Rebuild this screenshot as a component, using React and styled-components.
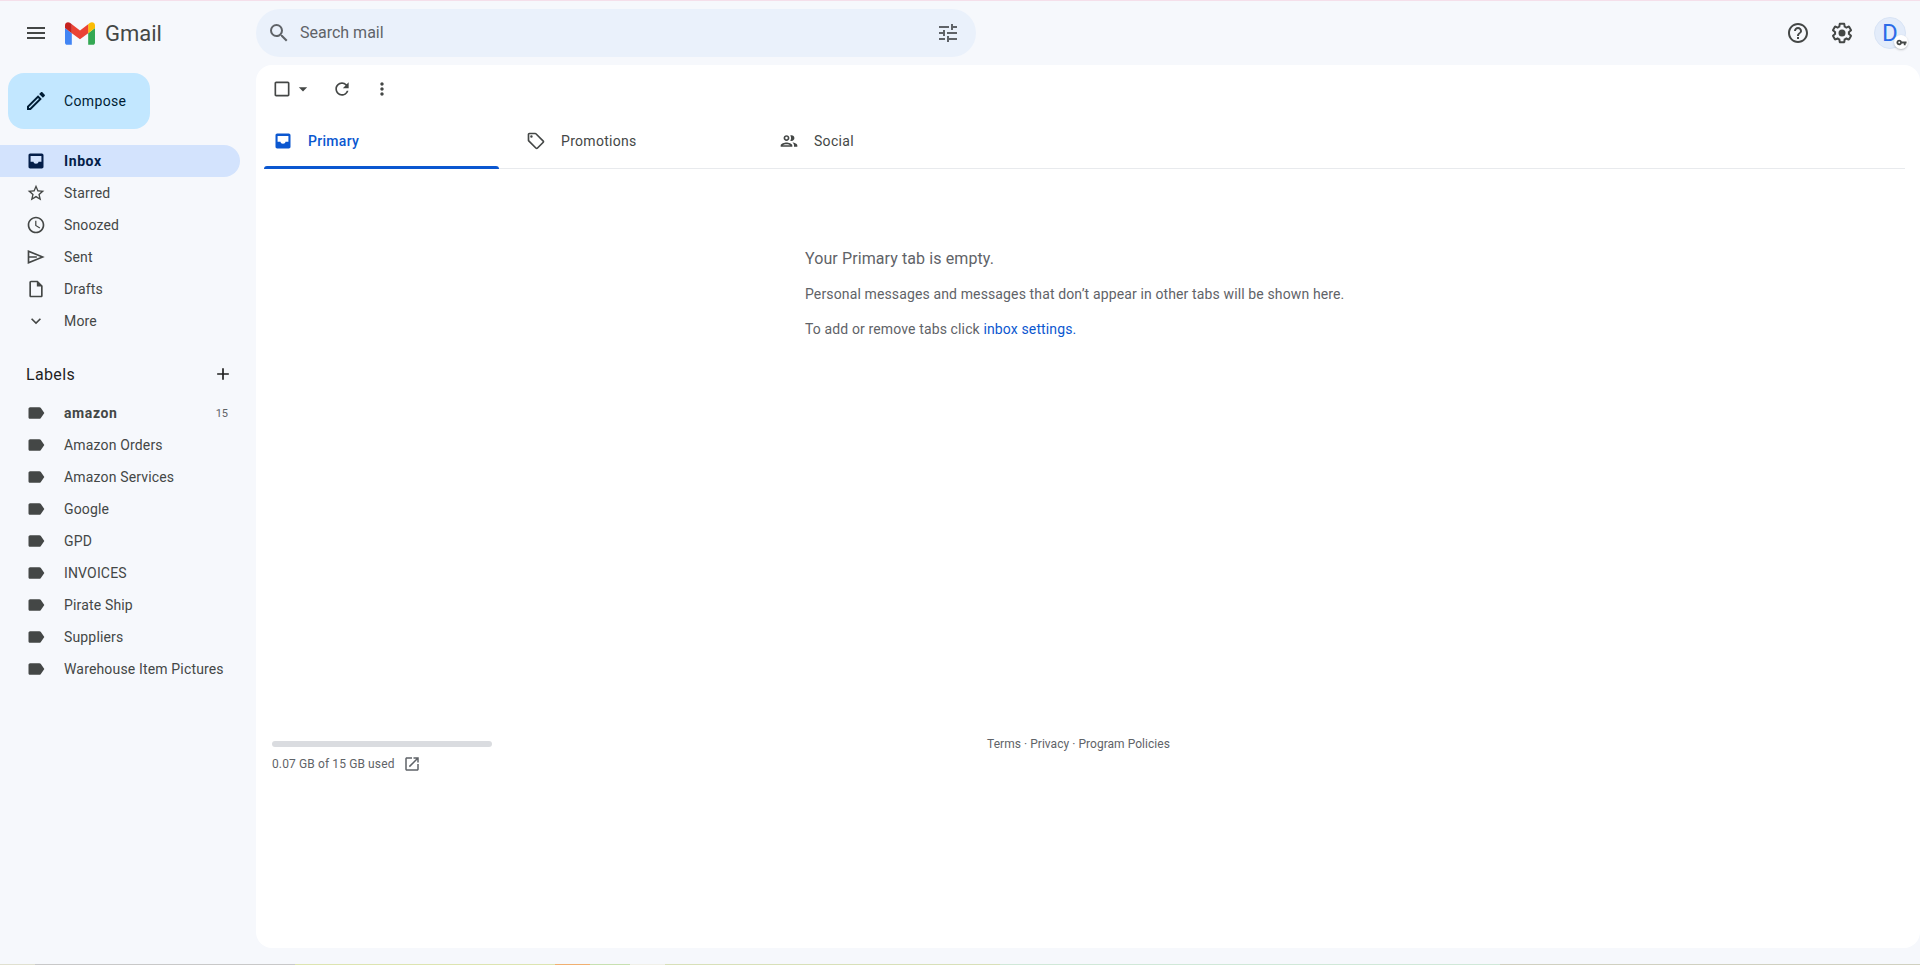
import styled, { createGlobalStyle } from "styled-components";

const paths = {
    menu: "M3 18h18v-2H3v2zm0-5h18v-2H3v2zm0-7v2h18V6H3z",
    edit: "M14.06 9.02l.92.92L5.92 19H5v-.92l9.06-9.06M17.66 3c-.25 0-.51.1-.7.29l-1.83 1.83 3.75 3.75 1.83-1.83c.39-.39.39-1.02 0-1.41l-2.34-2.34c-.2-.2-.45-.29-.71-.29zm-3.6 3.19L3 17.25V21h3.75L17.81 9.94l-3.75-3.75z",
    inbox: "M19 3H5c-1.1 0-2 .9-2 2v14c0 1.1.9 2 2 2h14c1.1 0 2-.9 2-2V5c0-1.1-.9-2-2-2zM18.5 13H15c0 1.3-1.3 2.4-3 2.4S9 14.3 9 13H5.5V6h13z",
    star: "M22 9.24l-7.19-.62L12 2 9.19 8.63 2 9.24l5.46 4.73L5.82 21 12 17.27 18.18 21l-1.63-7.03L22 9.24zM12 15.4l-3.76 2.27 1-4.28-3.32-2.88 4.38-.38L12 6.1l1.71 4.04 4.38.38-3.32 2.88 1 4.28L12 15.4z",
    clock: "M11.99 2C6.47 2 2 6.48 2 12s4.47 10 9.99 10C17.52 22 22 17.52 22 12S17.52 2 11.99 2zM12 20c-4.42 0-8-3.58-8-8s3.58-8 8-8 8 3.58 8 8-3.58 8-8 8zm.5-13H11v6l5.25 3.15.75-1.23-4.5-2.67z",
    send: "M2 3.5L22.5 12 2 20.5zM4 6.6v4.6h9v1.6H4v4.6L17.4 12z",
    draft: "M14 2H6c-1.1 0-2 .9-2 2v16c0 1.1.9 2 2 2h12c1.1 0 2-.9 2-2V8l-6-6zM6 20V4h7v5h5v11H6z",
    more: "M16.59 8.59L12 13.17 7.41 8.59 6 10l6 6 6-6z",
    add: "M19 13h-6v6h-2v-6H5v-2h6V5h2v6h6v2z",
    label: "M17.63 5.84C17.27 5.33 16.67 5 16 5L5 5.01C3.9 5.01 3 5.9 3 7v10c0 1.1.9 1.99 2 1.99L16 19c.67 0 1.27-.33 1.63-.84L22 12l-4.37-6.16z",
    search: "M15.5 14h-.79l-.28-.27A6.471 6.471 0 0 0 16 9.5 6.5 6.5 0 1 0 9.5 16c1.61 0 3.09-.59 4.23-1.57l.27.28v.79l5 4.99L20.49 19l-4.99-5zm-6 0C7.01 14 5 11.99 5 9.5S7.01 5 9.5 5 14 7.01 14 9.5 11.99 14 9.5 14z",
    tune: "M3 17v2h6v-2H3zM3 5v2h10V5H3zm10 16v-2h8v-2h-8v-2h-2v6h2zM7 9v2H3v2h4v2h2V9H7zm14 4v-2H11v2h10zm-6-4h2V7h4V5h-4V3h-2v6z",
    help: "M11 18h2v-2h-2v2zm1-16C6.48 2 2 6.48 2 12s4.48 10 10 10 10-4.48 10-10S17.52 2 12 2zm0 18c-4.41 0-8-3.59-8-8s3.59-8 8-8 8 3.59 8 8-3.59 8-8 8zm0-14c-2.21 0-4 1.79-4 4h2c0-1.1.9-2 2-2s2 .9 2 2c0 2-3 1.75-3 5h2c0-2.25 3-2.5 3-5 0-2.21-1.79-4-4-4z",
    gear: "M13.85 22.25h-3.7c-.74 0-1.36-.54-1.45-1.27l-.27-1.89c-.27-.14-.53-.29-.79-.46l-1.8.72c-.7.26-1.47-.03-1.81-.65L2.2 15.53c-.35-.66-.2-1.44.36-1.88l1.53-1.19c-.01-.15-.02-.3-.02-.46 0-.15.01-.31.02-.46l-1.52-1.19c-.59-.45-.74-1.26-.37-1.88l1.85-3.19c.34-.62 1.11-.9 1.79-.63l1.81.73c.26-.17.52-.32.78-.46l.27-1.91c.09-.7.71-1.25 1.44-1.25h3.7c.74 0 1.36.54 1.45 1.27l.27 1.89c.27.14.53.29.79.46l1.8-.72c.71-.26 1.48.03 1.82.65l1.84 3.18c.36.66.2 1.44-.36 1.88l-1.52 1.19c.01.15.02.3.02.46s-.01.31-.02.46l1.52 1.19c.56.45.72 1.23.37 1.86l-1.86 3.22c-.34.62-1.11.9-1.8.63l-1.8-.72c-.26.17-.52.32-.78.46l-.27 1.91c-.1.68-.72 1.22-1.46 1.22zm-3.23-2h2.76l.37-2.55.53-.22c.44-.18.88-.44 1.34-.78l.45-.34 2.38.96 1.38-2.4-2.03-1.58.07-.56c.03-.26.06-.51.06-.78s-.03-.53-.06-.78l-.07-.56 2.03-1.58-1.39-2.4-2.39.96-.45-.35c-.42-.32-.87-.58-1.33-.77l-.52-.22-.37-2.55h-2.76l-.37 2.55-.53.21c-.44.19-.88.44-1.34.79l-.45.33-2.38-.95-1.39 2.39 2.03 1.58-.07.56a7 7 0 0 0-.06.79c0 .26.02.53.06.78l.07.56-2.03 1.58 1.38 2.4 2.39-.96.45.35c.43.33.86.58 1.33.77l.53.22.38 2.55zM12 15.5a3.5 3.5 0 1 0 0-7 3.5 3.5 0 0 0 0 7z",
    checkbox: "M19 5v14H5V5h14m0-2H5c-1.1 0-2 .9-2 2v14c0 1.1.9 2 2 2h14c1.1 0 2-.9 2-2V5c0-1.1-.9-2-2-2z",
    caret: "M7 10l5 5 5-5z",
    refresh: "M17.65 6.35A7.958 7.958 0 0 0 12 4c-4.42 0-7.99 3.58-7.99 8s3.57 8 7.99 8c3.73 0 6.84-2.55 7.73-6h-2.08A5.99 5.99 0 0 1 12 18c-3.31 0-6-2.69-6-6s2.69-6 6-6c1.66 0 3.14.69 4.22 1.78L13 11h7V4l-2.35 2.35z",
    dots: "M12 8c1.1 0 2-.9 2-2s-.9-2-2-2-2 .9-2 2 .9 2 2 2zm0 2c-1.1 0-2 .9-2 2s.9 2 2 2 2-.9 2-2-.9-2-2-2zm0 6c-1.1 0-2 .9-2 2s.9 2 2 2 2-.9 2-2-.9-2-2-2z",
    tag: "M21.41 11.41l-8.83-8.83c-.37-.37-.88-.58-1.41-.58H4c-1.1 0-2 .9-2 2v7.17c0 .53.21 1.04.59 1.41l8.83 8.83c.78.78 2.05.78 2.83 0l7.17-7.17c.78-.78.78-2.04-.01-2.83zM12.83 20L4 11.17V4h7.17L20 12.83 12.83 20zM6.5 8a1.5 1.5 0 1 0 0-3 1.5 1.5 0 0 0 0 3z",
    people: "M9 13.75c-2.34 0-7 1.17-7 3.5V19h14v-1.75c0-2.33-4.66-3.5-7-3.5zM4.34 17c.84-.58 2.87-1.25 4.66-1.25s3.82.67 4.66 1.25H4.34zM9 12c1.93 0 3.5-1.57 3.5-3.5S10.93 5 9 5 5.5 6.57 5.5 8.5 7.07 12 9 12zm0-5c.83 0 1.5.67 1.5 1.5S9.83 10 9 10s-1.5-.67-1.5-1.5S8.17 7 9 7zm7.04 6.81c1.16.84 1.96 1.96 1.96 3.44V19h4v-1.75c0-2.02-3.5-3.17-5.96-3.44zM15 12c1.93 0 3.5-1.57 3.5-3.5S16.93 5 15 5c-.54 0-1.04.13-1.5.35.63.89 1 1.98 1 3.15s-.37 2.26-1 3.15c.46.22.96.35 1.5.35z",
    open: "M19 19H5V5h7V3H5c-1.11 0-2 .9-2 2v14c0 1.1.89 2 2 2h14c1.1 0 2-.9 2-2v-7h-2v7zM14 3v2h3.59l-9.83 9.83 1.41 1.41L19 6.41V10h2V3h-7z",
    key: "M12.65 10C11.83 7.67 9.61 6 7 6c-3.31 0-6 2.69-6 6s2.69 6 6 6c2.61 0 4.83-1.67 5.65-4H17v4h4v-4h2v-4H12.65zM7 14c-1.1 0-2-.9-2-2s.9-2 2-2 2 .9 2 2-.9 2-2 2z",
};

const Global = createGlobalStyle`
    html, body {
        margin: 0;
        padding: 0;
        height: 100%;
        overflow: hidden;
        background: #f6f8fc;
    }
    * {
        box-sizing: border-box;
    }
`
const Page = styled.div`
    height: 965px;
    display: flex;
    flex-direction: column;
    font-family: Roboto, "Liberation Sans", sans-serif;
    font-size: 14px;
    letter-spacing: 0.13px;
    color: #444746;
    background: #f6f8fc;
`
const TopEdge = styled.div`
    height: 1px;
    flex: none;
    background: #f5dfea;
`
const BottomEdge = styled.div`
    height: 1px;
    flex: none;
    background: linear-gradient(90deg,
        #e0e0d0 0, #e0e0d0 35px,
        #c8c8c8 35px, #c8c8c8 295px,
        #dde4b0 295px, #dde4b0 555px,
        #f0b070 555px, #f0b070 590px,
        #c8e0b0 590px, #c8e0b0 630px,
        #f0f0e8 630px, #f0f0e8 665px,
        #d8e0b8 665px, #d8e0b8 1000px,
        #d0e8d8 1000px, #d0e8d8 1500px,
        #d0d0c0 1500px);
`
const Topbar = styled.header`
    height: 64px;
    flex: none;
    display: flex;
    align-items: center;
`
const Brand = styled.div`
    width: 256px;
    flex: none;
    display: flex;
    align-items: center;
    padding-left: 24px;
`
const Wordmark = styled.span`
    margin-left: 10px;
    font-size: 22px;
    letter-spacing: 0;
    color: #444746;
`
const Search = styled.div`
    width: 720px;
    height: 48px;
    display: flex;
    align-items: center;
    padding: 0 16px 0 11px;
    border-radius: 24px;
    background: #eaf1fb;
    font-size: 16px;
    letter-spacing: 0;
    color: #5f6368;
`
const SearchText = styled.span`
    margin: 0 0 2px 9px;
    flex: 1;
`
const SearchTune = styled.span`
    display: flex;
    margin-bottom: 1px;
`
const Actions = styled.div`
    margin-left: auto;
    display: flex;
    align-items: center;
    padding-right: 14px;
`
const ActionIcon = styled.span`
    display: flex;
    margin-left: 20px;
    color: #444746;
`
const Avatar = styled.div`
    position: relative;
    width: 32px;
    height: 32px;
    margin-left: 20px;
    border-radius: 50%;
    background: #e3ecfa;
    border: 1px solid #d9e4f5;
    display: flex;
    align-items: center;
    justify-content: center;
    color: #2a6be8;
    font-size: 24px;
    line-height: 1;
`
const KeyBadge = styled.span`
    position: absolute;
    right: -3px;
    bottom: -1px;
    width: 14px;
    height: 14px;
    border-radius: 50%;
    background: #fff;
    box-shadow: 0 1px 2px rgba(60, 64, 67, 0.3);
    display: flex;
    align-items: center;
    justify-content: center;
    color: #444746;
`
const Body = styled.div`
    flex: 1;
    display: flex;
    min-height: 0;
    padding-bottom: 16px;
`
const Sidebar = styled.nav`
    width: 256px;
    flex: none;
`
const Compose = styled.button`
    width: 142px;
    height: 56px;
    margin: 8px 0 16px 8px;
    padding: 0 0 0 16px;
    display: flex;
    align-items: center;
    gap: 16px;
    border: 0;
    border-radius: 16px;
    background: #c2e7ff;
    color: #001d35;
    font: 400 14px Roboto, sans-serif;
    letter-spacing: 0.35px;
`
const Row = styled.div`
    width: 240px;
    height: 32px;
    display: flex;
    align-items: center;
    gap: 18px;
    padding: 0 12px 0 26px;
    border-radius: 0 16px 16px 0;
    background: ${({ $active }) => ($active ? "#d3e3fd" : "transparent")};
    color: ${({ $active }) => ($active ? "#041e49" : "#444746")};
    font-weight: ${({ $active, $bold }) => ($active || $bold ? 700 : 400)};
    letter-spacing: ${({ $active, $bold }) => ($active || $bold ? "0.6px" : "0.16px")};
`
const RowText = styled.span`
    flex: 1;
`
const Count = styled.span`
    font-size: 11px;
    font-weight: 400;
    letter-spacing: 0;
    color: #5f6368;
`
const LabelsHead = styled.div`
    width: 240px;
    height: 40px;
    margin: 17px 0 3px;
    padding: 0 7px 0 26px;
    display: flex;
    align-items: center;
    justify-content: space-between;
    font-size: 16px;
    letter-spacing: 0.35px;
    color: #1f1f1f;
`
const Card = styled.main`
    flex: 1;
    border-radius: 16px;
    background: #fff;
    display: flex;
    flex-direction: column;
`
const Toolbar = styled.div`
    height: 48px;
    flex: none;
    display: flex;
    align-items: center;
    padding-left: 16px;
    color: #444746;
`
const ToolIcon = styled.span`
    display: flex;
    margin-left: ${({ $gap }) => $gap || 0}px;
`
const Tabs = styled.div`
    height: 56px;
    flex: none;
    display: flex;
    margin: 0 15px 0 8px;
    border-bottom: 1px solid #e8eaed;
`
const Tab = styled.div`
    position: relative;
    width: 253px;
    display: flex;
    align-items: center;
    gap: 15px;
    padding-left: 9px;
    letter-spacing: 0.3px;
    font-weight: ${({ $active }) => ($active ? 500 : 400)};
    color: ${({ $active }) => ($active ? "#0b57d0" : "#444746")};
`
const TabLine = styled.span`
    position: absolute;
    left: 0;
    bottom: -1px;
    width: 235px;
    height: 3px;
    border-radius: 3px 3px 0 0;
    background: #0b57d0;
`
const Empty = styled.section`
    padding: 80px 0 0 549px;
    color: #5f6368;
    line-height: 20px;
`
const EmptyTitle = styled.div`
    font-size: 16px;
    letter-spacing: 0.1px;
`
const EmptyLine = styled.div`
    margin-top: 15px;
`
const InboxLink = styled.span`
    color: #0b57d0;
`
const Footer = styled.footer`
    margin-top: 397px;
    padding: 0 35px 0 16px;
    display: grid;
    grid-template-columns: 1fr auto 1fr;
    align-items: start;
    font-size: 12px;
    letter-spacing: 0.04px;
    line-height: 16px;
    color: #5f6368;
`
const Storage = styled.div`
    padding-top: 5px;
`
const StorageBar = styled.div`
    width: 220px;
    height: 6px;
    border-radius: 3px;
    background: #dadce0;
`
const StorageText = styled.div`
    margin-top: 8px;
    display: flex;
    align-items: center;
    gap: 8px;
    letter-spacing: 0.12px;
`

const Icon = ({ name, size = 20 }) => (
    <svg width={size} height={size} viewBox="0 0 24 24" fill="currentColor" style={{ flex: "none", display: "block" }}>
        <path d={paths[name]} fillRule="evenodd" />
    </svg>
)

const GmailLogo = () => (
    <svg width="30" height="23" viewBox="52 42 88 66" style={{ marginLeft: 17 }}>
        <path fill="#4285f4" d="M58 108h14V74L52 59v43c0 3.32 2.69 6 6 6" />
        <path fill="#34a853" d="M120 108h14c3.32 0 6-2.69 6-6V59l-20 15" />
        <path fill="#fbbc04" d="M120 48v26l20-15v-8c0-7.42-8.47-11.65-14.4-7.2" />
        <path fill="#ea4335" d="M72 74V48l24 18 24-18v26L96 92" />
        <path fill="#c5221f" d="M52 51v8l20 15V48l-5.6-4.2c-5.94-4.45-14.4-.22-14.4 7.2" />
    </svg>
)

const mainNav = [
    { icon: "inbox", text: "Inbox", active: true },
    { icon: "star", text: "Starred" },
    { icon: "clock", text: "Snoozed" },
    { icon: "send", text: "Sent" },
    { icon: "draft", text: "Drafts" },
    { icon: "more", text: "More" },
]

const labels = ["Amazon Orders", "Amazon Services", "Google", "GPD", "INVOICES", "Pirate Ship", "Suppliers", "Warehouse Item Pictures"]

const App = () => {
    return (
        <Page>
            <Global />
            <TopEdge />
            <Topbar>
                <Brand>
                    <Icon name="menu" size={24} />
                    <GmailLogo />
                    <Wordmark>Gmail</Wordmark>
                </Brand>
                <Search>
                    <Icon name="search" size={24} />
                    <SearchText>Search mail</SearchText>
                    <SearchTune><Icon name="tune" size={24} /></SearchTune>
                </Search>
                <Actions>
                    <ActionIcon><Icon name="help" size={24} /></ActionIcon>
                    <ActionIcon><Icon name="gear" size={24} /></ActionIcon>
                    <Avatar>
                        D
                        <KeyBadge><Icon name="key" size={11} /></KeyBadge>
                    </Avatar>
                </Actions>
            </Topbar>
            <Body>
                <Sidebar>
                    <Compose><Icon name="edit" size={24} />Compose</Compose>
                    {mainNav.map((item) => (
                        <Row key={item.text} $active={item.active}>
                            <Icon name={item.icon} />
                            <RowText>{item.text}</RowText>
                        </Row>
                    ))}
                    <LabelsHead>Labels<Icon name="add" size={20} /></LabelsHead>
                    <Row $bold>
                        <Icon name="label" />
                        <RowText>amazon</RowText>
                        <Count>15</Count>
                    </Row>
                    {labels.map((text) => (
                        <Row key={text}>
                            <Icon name="label" />
                            <RowText>{text}</RowText>
                        </Row>
                    ))}
                </Sidebar>
                <Card>
                    <Toolbar>
                        <ToolIcon><Icon name="checkbox" /></ToolIcon>
                        <ToolIcon $gap={1}><Icon name="caret" /></ToolIcon>
                        <ToolIcon $gap={19}><Icon name="refresh" /></ToolIcon>
                        <ToolIcon $gap={20}><Icon name="dots" /></ToolIcon>
                    </Toolbar>
                    <Tabs>
                        <Tab $active><Icon name="inbox" />Primary<TabLine /></Tab>
                        <Tab><Icon name="tag" />Promotions</Tab>
                        <Tab><Icon name="people" />Social</Tab>
                    </Tabs>
                    <Empty>
                        <EmptyTitle>Your Primary tab is empty.</EmptyTitle>
                        <EmptyLine>Personal messages and messages that don’t appear in other tabs will be shown here.</EmptyLine>
                        <EmptyLine>To add or remove tabs click <InboxLink>inbox settings.</InboxLink></EmptyLine>
                    </Empty>
                    <Footer>
                        <Storage>
                            <StorageBar />
                            <StorageText>0.07 GB of 15 GB used <Icon name="open" size={18} /></StorageText>
                        </Storage>
                        <div>Terms · Privacy · Program Policies</div>
                    </Footer>
                </Card>
            </Body>
            <BottomEdge />
        </Page>
    )
}

export default App;
